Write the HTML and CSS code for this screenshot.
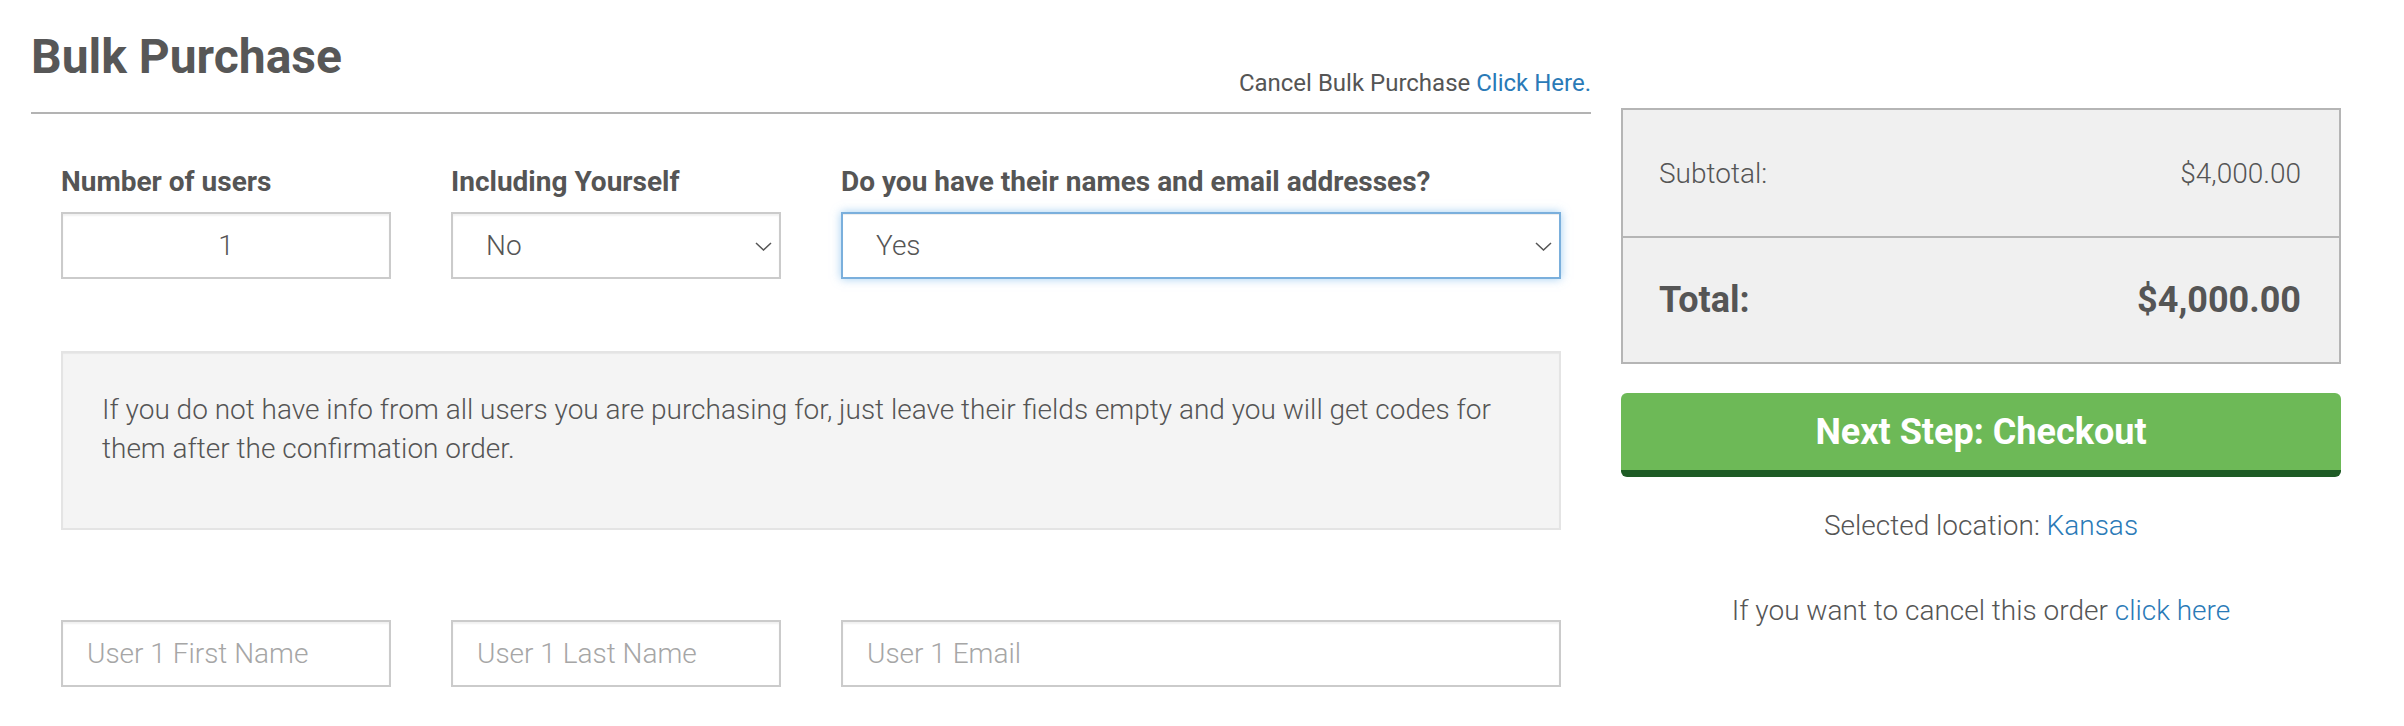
FILE: index.html
```html
<!DOCTYPE html>
<html lang="en">

<head>
    <meta charset="utf-8">
    <title>Bulk Purchase</title>
    <link rel="stylesheet" href="styles.css">
</head>

<body>
    <div class="page">
        <!--Bulk purchase form-->
        <main class="bulk">
            <div class="bulk-head">
                <h1>Bulk Purchase</h1>
                <p class="cancel">Cancel Bulk Purchase <a href="#">Click Here.</a></p>
            </div>

            <div class="form-row">
                <div class="field">
                    <label for="count">Number of users</label>
                    <input type="text" id="count" class="form-control num" value="1">
                </div>
                <div class="field">
                    <label for="yourself">Including Yourself</label>
                    <div class="select-wrap">
                        <select id="yourself" class="form-control">
                            <option>No</option>
                            <option>Yes</option>
                        </select>
                        <svg class="chevron" viewBox="0 0 17 9" width="17" height="9">
                            <path d="M1 1l7.5 7L16 1" fill="none" stroke="#555" stroke-width="1.5" />
                        </svg>
                    </div>
                </div>
                <div class="field">
                    <label for="hasinfo">Do you have their names and email addresses?</label>
                    <div class="select-wrap">
                        <select id="hasinfo" class="form-control focused">
                            <option>Yes</option>
                            <option>No</option>
                        </select>
                        <svg class="chevron" viewBox="0 0 17 9" width="17" height="9">
                            <path d="M1 1l7.5 7L16 1" fill="none" stroke="#555" stroke-width="1.5" />
                        </svg>
                    </div>
                </div>
            </div>

            <div class="well">
                <p>If you do not have info from all users you are purchasing for, just leave their fields empty and you
                    will get codes for them after the confirmation order.</p>
            </div>

            <!--One line per user-->
            <div class="form-row users">
                <div class="field">
                    <input type="text" class="form-control" placeholder="User 1 First Name">
                </div>
                <div class="field">
                    <input type="text" class="form-control" placeholder="User 1 Last Name">
                </div>
                <div class="field">
                    <input type="email" class="form-control" placeholder="User 1 Email">
                </div>
            </div>
        </main>

        <!--Order summary-->
        <aside class="summary">
            <div class="totals">
                <div class="line">
                    <span>Subtotal:</span>
                    <span>$4,000.00</span>
                </div>
                <div class="line total">
                    <span>Total:</span>
                    <span>$4,000.00</span>
                </div>
            </div>

            <button class="btn-next" type="button">Next Step: Checkout</button>

            <p class="location">Selected location: <a href="#">Kansas</a></p>
            <p class="cancel-order">If you want to cancel this order <a href="#">click here</a></p>
        </aside>
    </div>
</body>

</html>
```

FILE: styles.css
```css
/*global styling*/
* {
    box-sizing: border-box;
    font-family: Roboto, "Liberation Sans", sans-serif;
}

body {
    margin: 0;
    padding: 0;
    background: #fff;
    color: #555;
}

a {
    color: #2a7ab7;
    text-decoration: none;
}

/*two columns: form and summary*/
.page {
    display: grid;
    grid-template-columns: 1560px 720px;
    column-gap: 30px;
    padding: 28px 0 0 31px;
}

/*title bar*/
.bulk-head {
    display: flex;
    justify-content: space-between;
    align-items: flex-start;
    border-bottom: 2px solid #b3b3b3;
    padding-bottom: 15px;
}

.bulk-head h1 {
    margin: 0;
    font-size: 48px;
    font-weight: 700;
    line-height: normal;
    color: #575757;
}

.cancel {
    margin: 41px 0 0 0;
    font-size: 24px;
    font-weight: 400;
}

/*form rows*/
.form-row {
    display: grid;
    grid-template-columns: 1fr 1fr 2fr;
    margin-top: 51px;
}

.form-row.users {
    margin-top: 90px;
}

.field {
    padding: 0 30px;
}

.field label {
    display: block;
    font-size: 28px;
    font-weight: 700;
    margin-bottom: 14px;
    white-space: nowrap;
}

.form-control {
    display: block;
    width: 100%;
    height: 67px;
    border: 2px solid #cbcbcb;
    border-radius: 0;
    background: #fff;
    box-shadow: inset 0 2px 2px rgba(0, 0, 0, 0.06);
    padding: 0 24px;
    font-size: 28px;
    font-weight: 300;
    color: #555;
    outline: none;
}

.form-control::placeholder {
    color: #a6a6a6;
}

.num {
    text-align: center;
}

/*selects with a drawn arrow*/
.select-wrap {
    position: relative;
}

.select-wrap select {
    appearance: none;
    -webkit-appearance: none;
    padding-left: 33px;
}

.select-wrap .chevron {
    position: absolute;
    right: 9px;
    top: 30px;
    pointer-events: none;
}

.form-control.focused {
    border-color: #7aafdc;
    box-shadow: inset 0 1px 1px rgba(0, 0, 0, 0.075), 0 0 9px rgba(102, 175, 233, 0.6);
}

/*info box*/
.well {
    margin: 72px 30px 0 30px;
    background: #f4f4f4;
    border: 2px solid #e4e4e4;
    box-shadow: inset 0 1px 1px rgba(0, 0, 0, 0.05);
    padding: 37px 39px 60px 39px;
}

.well p {
    margin: 0;
    font-size: 28px;
    font-weight: 300;
    line-height: 39px;
}

/*summary column*/
.summary {
    padding-top: 80px;
    text-align: center;
}

.totals {
    background: #f0f0f0;
    border: 2px solid #b5b5b5;
    text-align: left;
}

.line {
    display: flex;
    justify-content: space-between;
    align-items: center;
    height: 126px;
    padding: 0 38px 0 36px;
    font-size: 28px;
    font-weight: 300;
}

.line + .line {
    border-top: 2px solid #b5b5b5;
}

.line.total {
    font-size: 36px;
    font-weight: 700;
}

.btn-next {
    display: block;
    width: 100%;
    height: 84px;
    margin-top: 29px;
    background: #6db957;
    border: none;
    border-bottom: 7px solid #1e5b25;
    border-radius: 6px;
    color: #fff;
    font-size: 36px;
    font-weight: 700;
    padding: 0;
}

.location {
    margin: 32px 0 0 0;
    font-size: 28px;
    font-weight: 300;
}

.cancel-order {
    margin: 52px 0 0 0;
    font-size: 28px;
    font-weight: 300;
}
```
